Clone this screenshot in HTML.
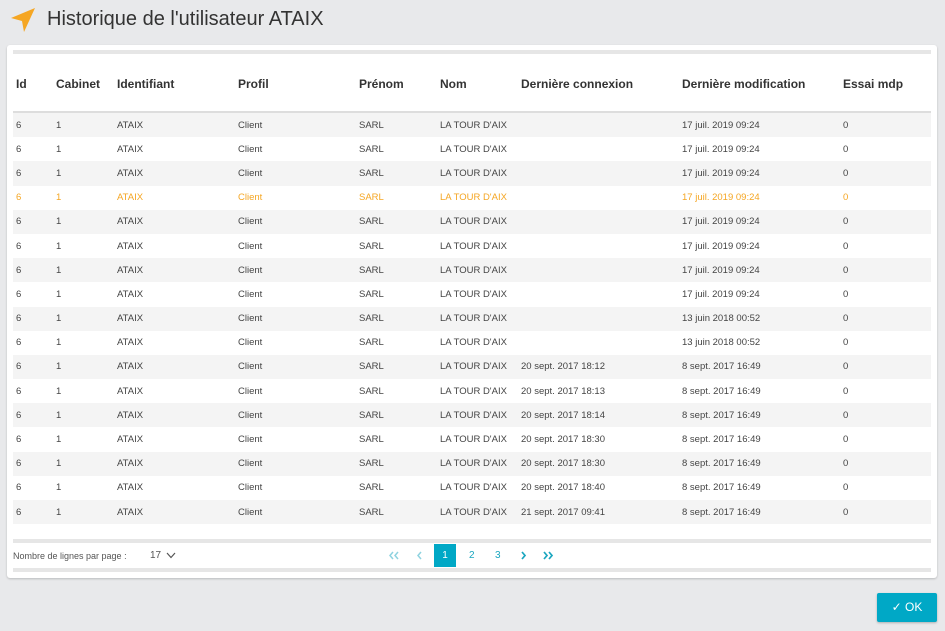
<!DOCTYPE html><html><head><style>
body{margin:0;width:945px;height:631px;background:#e8e9eb;font-family:"Liberation Sans",sans-serif;position:relative;overflow:hidden}
.t{position:absolute;left:47px;top:8px;font-size:20px;color:#333}
.card{position:absolute;left:7px;top:45px;width:930px;height:533px;background:#fff;border-radius:3px;box-shadow:0 1px 2px rgba(0,0,0,.2)}
.bar{position:absolute;left:6px;width:918px;height:4px;background:#e6e6e6}
table{position:absolute;left:6px;top:10px;width:918px;border-collapse:collapse;table-layout:fixed}
th{height:54px;text-align:left;font-size:12px;font-weight:bold;color:#333;border-bottom:2px solid #ddd;padding:2px 0 0 3px}
td{height:24.2px;font-size:9.5px;color:#444;padding:0 0 0 3px}
tr.g td{background:#f4f4f4}
tr.o td{color:#f5a623}
.pg{position:absolute;top:505px;font-size:10px;color:#1aa6bf}
.ok{position:absolute;left:877px;top:593px;width:60px;height:29px;background:#00a8c6;border-radius:2px;color:#fff;font-size:12px;text-align:center;line-height:29px;box-shadow:0 1px 2px rgba(0,0,0,.25)}
svg.c{position:absolute;top:506px}
</style></head><body>
<svg style="position:absolute;left:10px;top:7px" width="26" height="26" viewBox="0 0 26 26"><path d="M1 11 L25 1 L14 25 L12 14 Z" fill="#f5a623"/></svg>
<div class="t">Historique de l'utilisateur ATAIX</div>
<div class="card">
<div class="bar" style="top:5px"></div>
<table>
<colgroup><col style="width:40px"><col style="width:61px"><col style="width:121px"><col style="width:121px"><col style="width:81px"><col style="width:81px"><col style="width:161px"><col style="width:161px"><col></colgroup>
<tr><th>Id</th><th>Cabinet</th><th>Identifiant</th><th>Profil</th><th>Prénom</th><th>Nom</th><th>Dernière connexion</th><th>Dernière modification</th><th>Essai mdp</th></tr>
<tr class="g"><td>6</td><td>1</td><td>ATAIX</td><td>Client</td><td>SARL</td><td>LA TOUR D'AIX</td><td></td><td>17 juil. 2019 09:24</td><td>0</td></tr>
<tr><td>6</td><td>1</td><td>ATAIX</td><td>Client</td><td>SARL</td><td>LA TOUR D'AIX</td><td></td><td>17 juil. 2019 09:24</td><td>0</td></tr>
<tr class="g"><td>6</td><td>1</td><td>ATAIX</td><td>Client</td><td>SARL</td><td>LA TOUR D'AIX</td><td></td><td>17 juil. 2019 09:24</td><td>0</td></tr>
<tr class="o"><td>6</td><td>1</td><td>ATAIX</td><td>Client</td><td>SARL</td><td>LA TOUR D'AIX</td><td></td><td>17 juil. 2019 09:24</td><td>0</td></tr>
<tr class="g"><td>6</td><td>1</td><td>ATAIX</td><td>Client</td><td>SARL</td><td>LA TOUR D'AIX</td><td></td><td>17 juil. 2019 09:24</td><td>0</td></tr>
<tr><td>6</td><td>1</td><td>ATAIX</td><td>Client</td><td>SARL</td><td>LA TOUR D'AIX</td><td></td><td>17 juil. 2019 09:24</td><td>0</td></tr>
<tr class="g"><td>6</td><td>1</td><td>ATAIX</td><td>Client</td><td>SARL</td><td>LA TOUR D'AIX</td><td></td><td>17 juil. 2019 09:24</td><td>0</td></tr>
<tr><td>6</td><td>1</td><td>ATAIX</td><td>Client</td><td>SARL</td><td>LA TOUR D'AIX</td><td></td><td>17 juil. 2019 09:24</td><td>0</td></tr>
<tr class="g"><td>6</td><td>1</td><td>ATAIX</td><td>Client</td><td>SARL</td><td>LA TOUR D'AIX</td><td></td><td>13 juin 2018 00:52</td><td>0</td></tr>
<tr><td>6</td><td>1</td><td>ATAIX</td><td>Client</td><td>SARL</td><td>LA TOUR D'AIX</td><td></td><td>13 juin 2018 00:52</td><td>0</td></tr>
<tr class="g"><td>6</td><td>1</td><td>ATAIX</td><td>Client</td><td>SARL</td><td>LA TOUR D'AIX</td><td>20 sept. 2017 18:12</td><td>8 sept. 2017 16:49</td><td>0</td></tr>
<tr><td>6</td><td>1</td><td>ATAIX</td><td>Client</td><td>SARL</td><td>LA TOUR D'AIX</td><td>20 sept. 2017 18:13</td><td>8 sept. 2017 16:49</td><td>0</td></tr>
<tr class="g"><td>6</td><td>1</td><td>ATAIX</td><td>Client</td><td>SARL</td><td>LA TOUR D'AIX</td><td>20 sept. 2017 18:14</td><td>8 sept. 2017 16:49</td><td>0</td></tr>
<tr><td>6</td><td>1</td><td>ATAIX</td><td>Client</td><td>SARL</td><td>LA TOUR D'AIX</td><td>20 sept. 2017 18:30</td><td>8 sept. 2017 16:49</td><td>0</td></tr>
<tr class="g"><td>6</td><td>1</td><td>ATAIX</td><td>Client</td><td>SARL</td><td>LA TOUR D'AIX</td><td>20 sept. 2017 18:30</td><td>8 sept. 2017 16:49</td><td>0</td></tr>
<tr><td>6</td><td>1</td><td>ATAIX</td><td>Client</td><td>SARL</td><td>LA TOUR D'AIX</td><td>20 sept. 2017 18:40</td><td>8 sept. 2017 16:49</td><td>0</td></tr>
<tr class="g"><td>6</td><td>1</td><td>ATAIX</td><td>Client</td><td>SARL</td><td>LA TOUR D'AIX</td><td>21 sept. 2017 09:41</td><td>8 sept. 2017 16:49</td><td>0</td></tr>
</table>
<div class="bar" style="top:494px"></div>
<div style="position:absolute;left:6px;top:506px;font-size:9px;color:#555">Nombre de lignes par page :</div>
<div style="position:absolute;left:143px;top:505px;font-size:10px;color:#555">17</div>
<svg style="position:absolute;left:159px;top:507px" width="10" height="7" viewBox="0 0 10 7"><path d="M1 1 L5 5.5 L9 1" fill="none" stroke="#555" stroke-width="1.2"/></svg>
<svg class="c" style="left:381px" width="12" height="9" viewBox="0 0 12 9"><path d="M5 1 L2 4.5 L5 8 M10 1 L7 4.5 L10 8" fill="none" stroke="#8fd3e0" stroke-width="1.5"/></svg>
<svg class="c" style="left:409px" width="8" height="9" viewBox="0 0 8 9"><path d="M5 1 L2 4.5 L5 8" fill="none" stroke="#8fd3e0" stroke-width="1.5"/></svg>
<div style="position:absolute;left:427px;top:499px;width:22px;height:23px;background:#00a8c6;color:#fff;font-size:10px;text-align:center;line-height:23px">1</div>
<div class="pg" style="left:462px">2</div>
<div class="pg" style="left:488px">3</div>
<svg class="c" style="left:512px" width="8" height="9" viewBox="0 0 8 9"><path d="M3 1 L6 4.5 L3 8" fill="none" stroke="#1aa6bf" stroke-width="1.7"/></svg>
<svg class="c" style="left:535px" width="12" height="9" viewBox="0 0 12 9"><path d="M2 1 L5 4.5 L2 8 M7 1 L10 4.5 L7 8" fill="none" stroke="#1aa6bf" stroke-width="1.7"/></svg>
<div class="bar" style="top:523px"></div>
</div>
<div class="ok">&#10003; OK</div>
</body></html>
